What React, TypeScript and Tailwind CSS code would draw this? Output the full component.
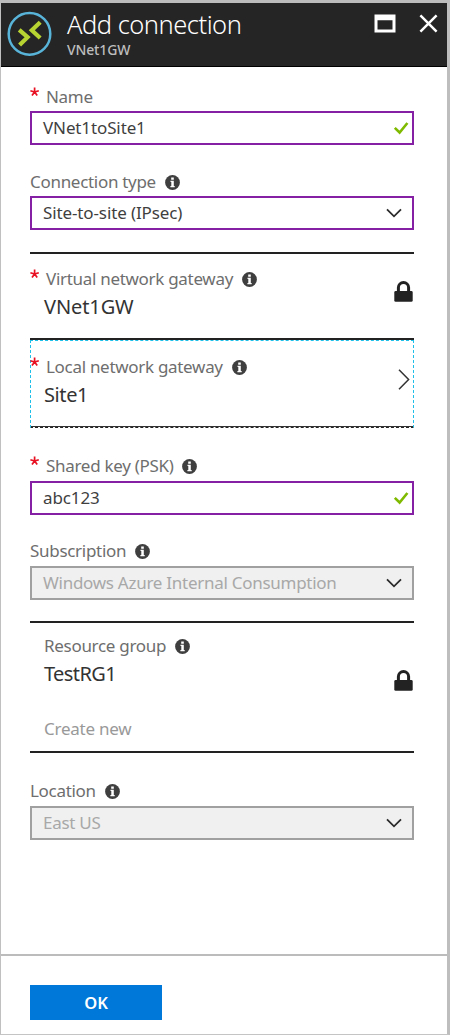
import type { ReactNode } from "react";

function InfoIcon() {
  return (
    <svg className="size-[15px] shrink-0" viewBox="0 0 15 15" aria-hidden="true">
      <circle cx="7.5" cy="7.5" r="7.4" fill="#3f3f3f" />
      <path d="M6.2 2.5h2.6v2.2H6.2zM5.5 5.8h3.3v5.1h.9v1.4H5.4v-1.4h.9V7.1h-.8z" fill="#fff" />
    </svg>
  );
}

function CheckIcon() {
  return (
    <svg className="h-[14px] w-[16px]" viewBox="0 0 16 14" fill="none" aria-hidden="true">
      <path d="M1.8 6.9 6.6 11.5 14.4 2" stroke="#7fba00" strokeWidth="2.6" />
    </svg>
  );
}

function ChevronDown() {
  return (
    <svg className="h-[10px] w-[16px]" viewBox="0 0 16 10" fill="none" aria-hidden="true">
      <path d="M1 1.3 8 8.3 15 1.3" stroke="#2b2b2b" strokeWidth="1.8" />
    </svg>
  );
}

function ChevronRight() {
  return (
    <svg className="h-[21px] w-[12px]" viewBox="0 0 12 21" fill="none" aria-hidden="true">
      <path d="M1 .8 10.6 10.5 1 20.2" stroke="#333" strokeWidth="1.5" />
    </svg>
  );
}

function LockIcon() {
  return (
    <svg className="h-[21px] w-[19px]" viewBox="0 0 19 21" aria-hidden="true">
      <path d="M4.4 11V6.6a5.1 5.1 0 0 1 10.2 0V11" fill="none" stroke="#222" strokeWidth="3" />
      <rect x=".3" y="10" width="18.4" height="10.8" rx="1.4" fill="#222" />
    </svg>
  );
}

function GatewayLogo() {
  return (
    <svg className="size-[45px]" viewBox="0 0 45 45" fill="none" aria-hidden="true">
      <circle cx="22.5" cy="22.9" r="20.8" stroke="#59b4d9" strokeWidth="2.5" />
      <path d="M12.2 18.8 20.6 26.2 12.6 34" stroke="#b8d432" strokeWidth="4.2" />
      <path d="M33.2 11.2 24.8 19.2 33.2 27" stroke="#b8d432" strokeWidth="4.2" />
    </svg>
  );
}

function Star() {
  return (
    <svg className="mt-[2px] h-[10px] w-4 shrink-0" viewBox="0 0 16 10" fill="none" aria-label="required">
      <path d="M4.6 5V.4M4.6 5 .4 3.7M4.6 5l4.2-1.3M4.6 5 2 8.6M4.6 5l2.6 3.6" stroke="#e81123" strokeWidth="1.7" />
    </svg>
  );
}

function Label({ children, required, info }: { children: ReactNode; required?: boolean; info?: boolean }) {
  return (
    <div className="flex h-6 text-[17px] leading-6 tracking-[-0.3px] text-[#6e6e6e]">
      {required && <Star />}
      <span className="whitespace-nowrap">{children}</span>
      {info && (
        <span className="ml-[9px] flex h-6 items-center">
          <InfoIcon />
        </span>
      )}
    </div>
  );
}

const boxStyles = {
  active: "border-[#8520a5] bg-white text-[#3f3f3f] tracking-[-0.12px]",
  disabled: "border-[#a0a0a0] bg-[#f0f0f0] text-[#a8a8a8] tracking-[-0.27px]",
};

function Box({ value, icon, state = "active" }: { value: string; icon: "check" | "chevron"; state?: "active" | "disabled" }) {
  return (
    <div className={`flex h-[34px] items-center justify-between border-2 pl-[11px] text-[17px] ${boxStyles[state]}`}>
      <span className="pb-px leading-6 whitespace-nowrap">{value}</span>
      {icon === "check" ? <span className="pr-[3px]"><CheckIcon /></span> : <span className="pr-[10px]"><ChevronDown /></span>}
    </div>
  );
}

export default function App() {
  return (
    <div className="flex h-[1035px] w-[450px] flex-col border-t-[3px] border-r-[3px] border-b border-l border-t-[#bcbcbc] border-r-[#bebebe] border-b-[#c4c4c4] border-l-[#c0c0c0] bg-white font-['Noto_Sans',sans-serif]">
      <header className="flex h-[64px] shrink-0 border-b border-black bg-[#252525] pl-[6px]">
        <div className="mt-[8px]">
          <GatewayLogo />
        </div>
        <div className="ml-[15px] flex-1">
          <h1 className="mt-[4px] h-[34px] text-[25.5px] leading-[34px] font-light tracking-[-0.5px] whitespace-nowrap text-white">Add connection</h1>
          <p className="h-[18px] text-[14px] leading-[18px] font-medium tracking-[-0.15px] text-[#bdbdbd]">VNet1GW</p>
        </div>
        <div className="mt-[11px] flex gap-[23px] pr-[9px]">
          <svg className="h-[19px] w-[22px]" viewBox="0 0 22 19" aria-label="Maximize">
            <path d="M.5.5h21v18H.5zM3.5 6.2v9.3h15V6.2z" fill="#fff" fillRule="evenodd" />
          </svg>
          <svg className="h-[19px] w-[19px]" viewBox="0 0 19 19" fill="none" aria-label="Close">
            <path d="M1.4 1.4 17.6 17.6M17.6 1.4 1.4 17.6" stroke="#fff" strokeWidth="2.5" />
          </svg>
        </div>
      </header>

      <main className="flex h-[887px] shrink-0 flex-col pr-[33px] pl-[29px]">
        <div className="mt-[18px]">
          <Label required>Name</Label>
          <div className="mt-[2px]"><Box value="VNet1toSite1" icon="check" /></div>
        </div>

        <div className="mt-[25px]">
          <Label info>Connection type</Label>
          <div className="mt-[2px]"><Box value="Site-to-site (IPsec)" icon="chevron" /></div>
        </div>

        <section className="mt-[22px] flex h-[86px] justify-between border-t-2 border-[#222]">
          <div className="pt-[13px]">
            <Label required info>Virtual network gateway</Label>
            <p className="mt-[2px] pl-[14px] text-[20px] leading-7 tracking-[-0.1px] text-[#333]">VNet1GW</p>
          </div>
          <div className="pt-[27px] pr-px"><LockIcon /></div>
        </section>

        <section className="h-[90px] border-t-2 border-[#222]">
          <div className="flex h-[88px] justify-between border border-dashed border-[#1ebfe8] border-b-[#222] shadow-[inset_0_-1px_0_#333]">
            <div className="-ml-px pt-[14px]">
              <Label required info>Local network gateway</Label>
              <p className="mt-[2px] pl-[14px] text-[20px] leading-7 tracking-[-0.4px] text-[#333]">Site1</p>
            </div>
            <div className="pt-[28px] pr-[3px]"><ChevronRight /></div>
          </div>
        </section>

        <div className="mt-[26px]">
          <Label required info>Shared key (PSK)</Label>
          <div className="mt-[3px]"><Box value="abc123" icon="check" /></div>
        </div>

        <div className="mt-[24px]">
          <Label info>Subscription</Label>
          <div className="mt-[3px]"><Box value="Windows Azure Internal Consumption" icon="chevron" state="disabled" /></div>
        </div>

        <section className="mt-[21px] flex h-[132px] justify-between border-y-2 border-[#222]">
          <div className="pt-[11px] pl-[14px]">
            <Label info>Resource group</Label>
            <p className="mt-[2px] text-[20px] leading-7 tracking-[-0.6px] text-[#333]">TestRG1</p>
            <p className="mt-[29px] text-[17px] leading-6 tracking-[-0.25px] text-[#999]">Create new</p>
          </div>
          <div className="pt-[47px] pr-px"><LockIcon /></div>
        </section>

        <div className="mt-[26px]">
          <Label info>Location</Label>
          <div className="mt-[3px]"><Box value="East US" icon="chevron" state="disabled" /></div>
        </div>
      </main>

      <footer className="flex-1 border-t-2 border-[#bcbcbc] pt-[29px] pl-[29px]">
        <button className="flex h-[35px] w-[132px] items-center justify-center bg-[#0078d9] pt-px text-[16.5px] font-semibold text-white">OK</button>
      </footer>
    </div>
  );
}
